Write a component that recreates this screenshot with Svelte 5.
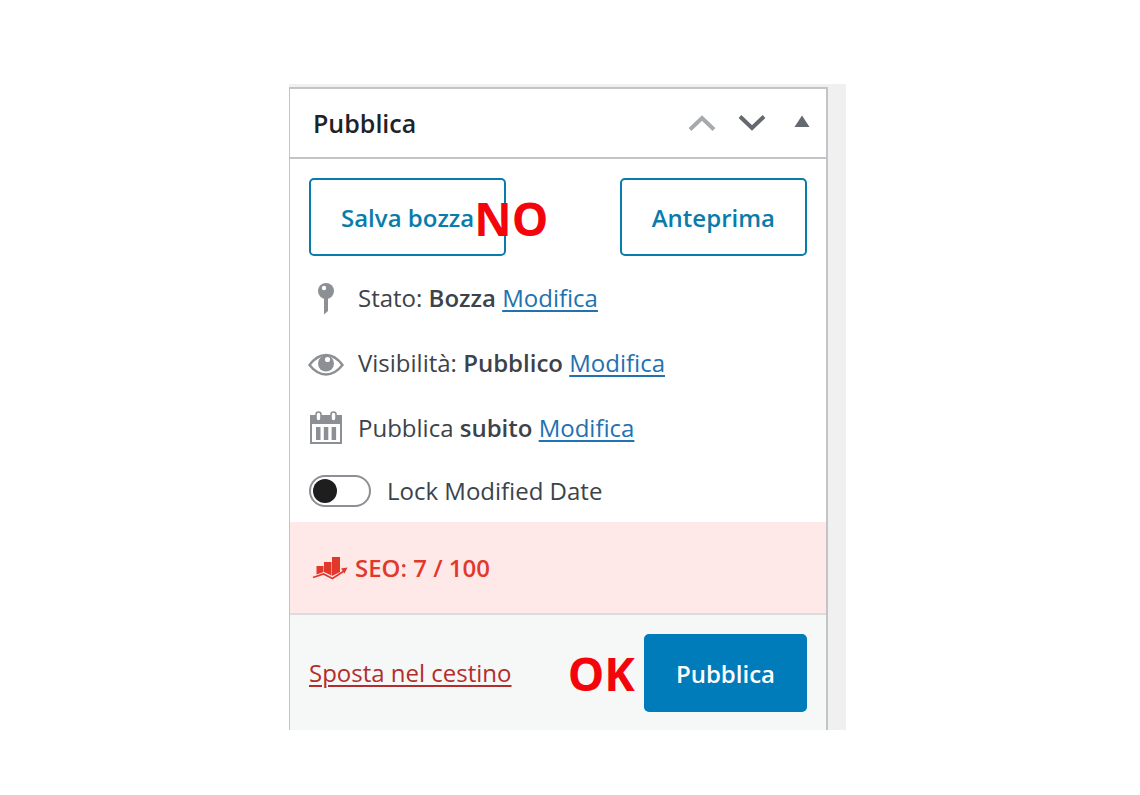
<script>
    let locked = false;
    const rows = [
        { icon: 'pin', label: 'Stato:', value: 'Bozza' },
        { icon: 'eye', label: 'Visibilità:', value: 'Pubblico' },
        { icon: 'calendar', label: 'Pubblica', value: 'subito' }
    ];
</script>

<main class="page">
    <div class="sidebar">
        <section class="panel">
            <header class="panel-header">
                <h2>Pubblica</h2>
                <div class="order">
                    <button class="icon-btn" disabled aria-label="Sposta in su">
                        <svg width="28" height="18" viewBox="0 0 28 18">
                            <path d="M2 15.5 L14 4 L26 15.5" fill="none" stroke="#a7aaad" stroke-width="4" />
                        </svg>
                    </button>
                    <button class="icon-btn" aria-label="Sposta in giù">
                        <svg width="28" height="18" viewBox="0 0 28 18">
                            <path d="M2 2.5 L14 14 L26 2.5" fill="none" stroke="#646970" stroke-width="4" />
                        </svg>
                    </button>
                    <button class="icon-btn" aria-label="Chiudi pannello">
                        <svg width="16" height="18" viewBox="0 0 16 18">
                            <path d="M8 1.5 L15.5 13 H0.5 Z" fill="#646970" />
                        </svg>
                    </button>
                </div>
            </header>

            <div class="actions">
                <div class="noted">
                    <button class="btn">Salva bozza</button>
                    <span class="note over">NO</span>
                </div>
                <button class="btn">Anteprima</button>
            </div>

            {#each rows as row}
                <div class="row">
                    <svg class="row-icon" width="36" height="36" viewBox="0 0 36 36">
                        {#if row.icon === 'pin'}
                            <circle cx="18" cy="11" r="8" fill="#8c8f94" />
                            <path d="M16 17 H20 V31 L16 34.5 Z" fill="#8c8f94" />
                            <circle cx="16" cy="8" r="2.2" fill="#fff" />
                        {:else if row.icon === 'eye'}
                            <path d="M1.5 20 Q9 10 18 10 Q27 10 34.5 20 Q27 29.5 18 29.5 Q9 29.5 1.5 20 Z" fill="#fff" stroke="#8c8f94" stroke-width="2.4" />
                            <circle cx="18" cy="18.5" r="8" fill="#8c8f94" />
                            <circle cx="19.5" cy="14.5" r="2.6" fill="#fff" />
                        {:else}
                            <path d="M2 5 H34 V34 H2 Z" fill="#8c8f94" />
                            <path d="M4 14 H32 V32 H4 Z" fill="#fff" />
                            <path d="M8 17 H12.5 V30 H8 Z M15.8 17 H20.3 V30 H15.8 Z M23.6 17 H28.1 V30 H23.6 Z" fill="#8c8f94" />
                            <rect x="8" y="2" width="5" height="9" rx="2.5" fill="#fff" stroke="#8c8f94" stroke-width="1.6" />
                            <rect x="23" y="2" width="5" height="9" rx="2.5" fill="#fff" stroke="#8c8f94" stroke-width="1.6" />
                        {/if}
                    </svg>
                    <span>{row.label} <strong>{row.value}</strong> <a href="#modifica">Modifica</a></span>
                </div>
            {/each}

            <label class="row lock">
                <input type="checkbox" bind:checked={locked} />
                <span>Lock Modified Date</span>
            </label>

            <div class="seo">
                <svg width="36" height="26" viewBox="0 0 36 26">
                    <path d="M4.5 11 H11.5 V17 L4.5 19.5 Z M12 7 H19.5 V20.5 L12 17 Z M20 2 H28 V17 L20 21 Z" fill="#e2382c" />
                    <path d="M1 22.5 L11.5 19 L20.5 23.5 L32 16" fill="none" stroke="#e2382c" stroke-width="1.8" />
                    <path d="M29 13.5 L35.5 12.5 L32.5 18.5 Z" fill="#e2382c" />
                </svg>
                <span>SEO: 7 / 100</span>
            </div>

            <footer class="panel-footer">
                <a class="trash" href="#cestino">Sposta nel cestino</a>
                <div class="publish">
                    <span class="note">OK</span>
                    <button class="btn primary">Pubblica</button>
                </div>
            </footer>
        </section>
    </div>
</main>

<style>
:global(body) {
    margin: 0;
    background: #fff;
}
.page {
    display: grid;
    grid-template-columns: 289fr 557fr 294fr;
    padding: 84px 0 64px;
    font-family: "Open Sans", "Noto Sans", sans-serif;
    font-size: 24px;
    line-height: 32px;
    color: #3c434a;
}
.sidebar {
    grid-column: 2;
    padding: 3px 18px 0 0;
    background: #f0f0f0;
}
.panel {
    border: 2px solid #c3c4c7;
    border-left-width: 1px;
    border-bottom: none;
    background: #fff;
}
.panel-header {
    display: flex;
    align-items: center;
    justify-content: space-between;
    height: 68px;
    padding: 0 16px 0 23px;
    border-bottom: 2px solid #c3c4c7;
}
h2 {
    margin: 0;
    font-size: 25px;
    font-weight: 600;
    line-height: 32px;
    color: #1d2327;
}
.order {
    display: flex;
    gap: 22px;
}
.order .icon-btn:last-child {
    margin-left: 6px;
}
.icon-btn {
    display: flex;
    padding: 0;
    border: none;
    background: none;
    cursor: pointer;
}
.actions {
    display: flex;
    justify-content: space-between;
    padding: 19px 19px 9px;
}
.noted {
    position: relative;
}
.btn {
    height: 78px;
    padding: 0 30px;
    border: 2px solid #0a7cab;
    border-radius: 5px;
    background: #fff;
    color: #0a7cab;
    font-family: inherit;
    font-size: 24px;
    font-weight: 600;
    white-space: nowrap;
    cursor: pointer;
}
.btn.primary {
    border-color: #007cba;
    background: #007cba;
    color: #fff;
}
.note {
    font-size: 46px;
    font-weight: 700;
    line-height: 64px;
    color: #f4050c;
}
.note.over {
    position: absolute;
    top: 8px;
    right: -42px;
}
.row {
    display: flex;
    align-items: center;
    gap: 14px;
    height: 65px;
    padding: 0 18px;
    white-space: nowrap;
}
.row-icon {
    flex: none;
}
strong {
    font-weight: 600;
}
a {
    color: #2271b1;
    text-decoration-thickness: 2px;
    text-underline-offset: 3px;
}
.row.lock {
    gap: 16px;
    height: 62px;
    padding: 0 19px;
}
.lock input {
    appearance: none;
    display: flex;
    align-items: center;
    box-sizing: border-box;
    width: 62px;
    height: 32px;
    margin: 0;
    padding: 0 2px;
    border: 2px solid #8c8f94;
    border-radius: 16px;
    background: #fff;
}
.lock input::before {
    content: "";
    width: 24px;
    height: 24px;
    border-radius: 50%;
    background: #1e1e1e;
}
.lock input:checked {
    justify-content: flex-end;
}
.seo {
    display: flex;
    align-items: center;
    gap: 7px;
    height: 91px;
    padding: 0 22px;
    background: #ffe8e8;
    color: #e2382c;
    font-weight: 600;
}
.panel-footer {
    display: flex;
    align-items: center;
    justify-content: space-between;
    padding: 19px 19px 18px;
    border-top: 2px solid #dcdcde;
    background: #f6f7f7;
    white-space: nowrap;
}
.trash {
    color: #b32d2e;
}
.publish {
    display: flex;
    align-items: center;
    gap: 9px;
}
</style>
